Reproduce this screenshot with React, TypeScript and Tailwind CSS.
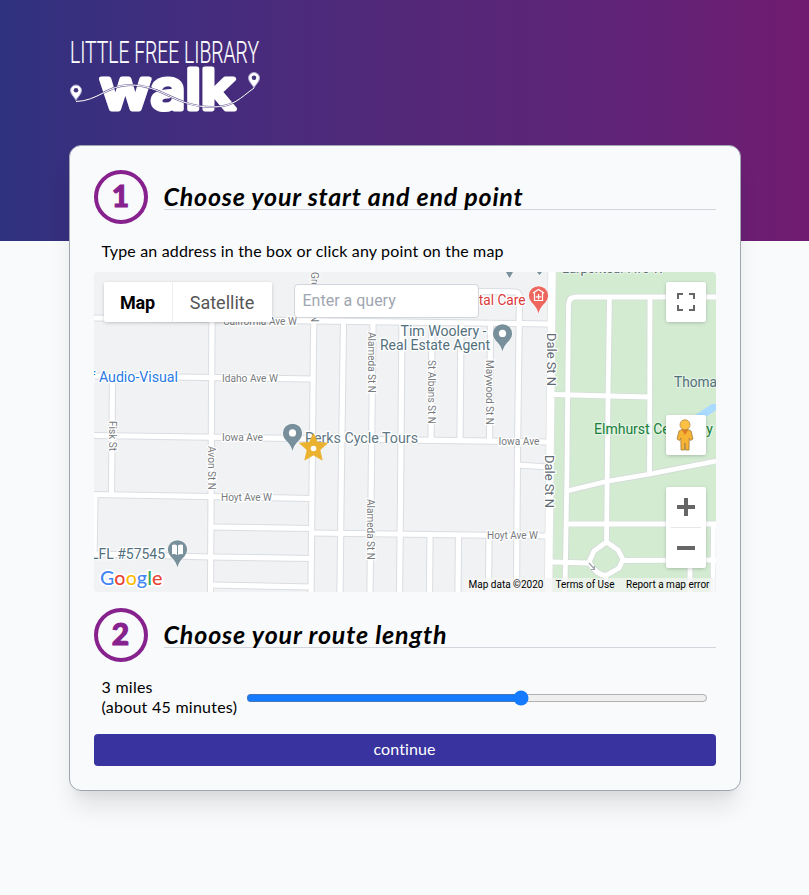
import React, { useState } from "react";

type Point = [number, number];

const streets: string[] = [
  "M94 318L548 324",
  "M94 376L313 379",
  "M94 435.5L548 442",
  "M94 494.5L312 498.5",
  "M211 527L312 528.5",
  "M312 533L548 536",
  "M94 554L211 557L312 558.5",
  "M211 585L312 587",
  "M112.5 376L111.5 495",
  "M95 495L94 556",
  "M212 320L210.5 592",
  "M315 272L313.5 340L311 592",
  "M343.5 322L341 500L340 592",
  "M373 322L371 500L370 592",
  "M402 322L400.5 500L399.5 592",
  "M432 322L431 440M430 535L429.5 592",
  "M461 322L460 440M458.5 535L458 592",
  "M490.5 322L489.5 441M489 535L488.5 592",
  "M440 291L515 292Q519 292 519.5 297L517.5 450L516.5 592",
  "M518 465L548 467",
];

const lanes: string[] = [
  "M565 592L567 470L568.5 305Q568.5 297 576 297L716 297",
  "M609.5 297L608 400L606.5 541",
  "M650 297L649.5 475",
  "M553 394.5L649 397",
  "M567 491L606 481.5L650 474L716 461",
  "M568 524H716",
  "M552 562L589 563",
  "M606.5 542L594 551L589 562Q596 575 606 575.5L619 568L623 559.5L618 550Z",
  "M623 560.5L716 560",
  "M605.5 575V592M690 561V592M713.5 524L713 592",
];

function Label({ x, y, w, children, size = 10, color = "#787c80", rotate, halo = "#fff" }: {
  x: number; y: number; w: number; children: string; size?: number; color?: string; rotate?: number; halo?: string;
}) {
  return (
    <text
      x={x}
      y={y}
      textLength={w}
      lengthAdjust="spacingAndGlyphs"
      fontSize={size}
      fill={color}
      stroke={halo}
      strokeWidth={2.5}
      strokeLinejoin="round"
      className="[paint-order:stroke]"
      transform={rotate ? `rotate(${rotate} ${x} ${y})` : undefined}
    >
      {children}
    </text>
  );
}

function Pin({ at, color = "#78909c", children }: { at: Point; color?: string; children?: React.ReactNode }) {
  return (
    <g transform={`translate(${at[0]} ${at[1]})`}>
      <path d="M0 17.5C-1.500 12-4 9.500-7 6.300A9.600 9.600 0 1 1 7 6.300C4 9.500 1.500 12 0 17.500Z" fill={color} stroke="#fff" strokeWidth="1" className="[paint-order:stroke]" />
      {children ?? <circle r="3.6" cy="-.6" fill="#fff" />}
    </g>
  );
}

function StreetMap() {
  return (
    <svg viewBox="94 272 622 320" className="block h-80 w-full font-['Roboto',sans-serif]">
      <rect x="94" y="272" width="622" height="320" fill="#f1f2f4" />
      <path d="M552 272H716V592H549Z" fill="#d2ebd1" />
      <path d="M692 417L712 404H716V410L700 421Z" fill="#aadaff" />
      <g fill="none" stroke="#dadde1" strokeWidth="7.2">
        {streets.map((d) => <path key={d} d={d} />)}
      </g>
      <g fill="none" stroke="#d5dcd9" strokeWidth="6.6">
        {lanes.map((d) => <path key={d} d={d} />)}
      </g>
      <path d="M552 272L548.500 592" stroke="#dfe3e2" strokeWidth="9" />
      <g fill="none" stroke="#fff">
        <g strokeWidth="5.2">{streets.map((d) => <path key={d} d={d} />)}</g>
        <g strokeWidth="4.8">{lanes.map((d) => <path key={d} d={d} />)}</g>
        <path d="M552 272L548.500 592" strokeWidth="7.4" />
      </g>
      <path d="M589 563L594.500 569M594.500 566V569.500H591" fill="none" stroke="#9aa3ab" strokeWidth="1.2" />

      <Label x={223} y={324.500} w={74}>California Ave W</Label>
      <Label x={222} y={381.500} w={56}>Idaho Ave W</Label>
      <Label x={222} y={441} w={41}>Iowa Ave</Label>
      <Label x={221} y={501} w={51}>Hoyt Ave W</Label>
      <Label x={498.500} y={445} w={41}>Iowa Ave</Label>
      <Label x={487} y={539} w={51}>Hoyt Ave W</Label>
      <Label x={108.500} y={421} w={30} rotate={90}>Fisk St</Label>
      <Label x={207.500} y={446} w={44} rotate={90}>Avon St N</Label>
      <Label x={310.500} y={272} w={50} rotate={90}>Grotto St N</Label>
      <Label x={368} y={332} w={61} rotate={90}>Alameda St N</Label>
      <Label x={366.500} y={499} w={61} rotate={90}>Alameda St N</Label>
      <Label x={427.500} y={360} w={64} rotate={90}>St Albans St N</Label>
      <Label x={486} y={360} w={65} rotate={90}>Maywood St N</Label>
      <Label x={546.500} y={333} w={53} size={13} color="#5f6b75" rotate={90}>Dale St N</Label>
      <Label x={545} y={455} w={53} size={13} color="#5f6b75" rotate={90}>Dale St N</Label>
      <Label x={562} y={273} w={102} size={12} color="#5f6b75" halo="#e3f2e2">Larpenteur Ave W</Label>
      <Label x={90.500} y={382} w={87.500} size={14} color="#2879e4">f Audio-Visual</Label>
      <Label x={400.500} y={336} w={86} size={14} color="#526f7d">Tim Woolery -</Label>
      <Label x={380} y={350} w={110} size={14} color="#526f7d">Real Estate Agent</Label>
      <Label x={455} y={305} w={70.500} size={14} color="#db3939">Dental Care</Label>
      <Label x={305} y={443} w={113} size={14} color="#607784">Perks Cycle Tours</Label>
      <Label x={91} y={559} w={74} size={14} color="#526f7d">LFL #57545</Label>
      <Label x={674} y={387} w={50} size={14} color="#52707a" halo="#e3f2e2">Thomas</Label>
      <Label x={594} y={434} w={119} size={14} color="#168039" halo="#e3f2e2">Elmhurst Cemetery</Label>

      <path d="M506 272H513L509.500 278ZM537 272H542L539.500 275Z" fill="#78909c" />
      <Pin at={[502.500, 334]} />
      <Pin at={[292.500, 433.500]} />
      <Pin at={[177.500, 550]}>
        <path d="M-5.500-5Q-2.500-6-.5-4.500V5Q-2.500 3.500-5.500 4.300ZM5.500-5Q2.500-6 .5-4.500V5Q2.500 3.500 5.500 4.300Z" fill="#fff" />
      </Pin>
      <Pin at={[538.500, 296]} color="#ee675f">
        <g fill="none" stroke="#fff" strokeWidth="1.200">
          <path d="M-5.500-3L0-6.500L5.500-3M-4-3.500V4.500H4V-3.500M0-2V3.500M-2.700.8H2.700" />
        </g>
      </Pin>
      <path d="M313.500 433.500L317.400 442.200L327.500 443.200L319.900 450L322.200 460L313.500 455L304.800 460L307.100 450L299.500 443.200L309.600 442.200Z" fill="#ebb22f" stroke="#ebb22f" strokeWidth=".8" />
      <circle cx="313.500" cy="448.500" r="2.800" fill="#fff" />

      <g fontSize="19.5" className="font-['Lato',sans-serif]" fontWeight="500" strokeWidth="3.500" stroke="#fff">
        <text x="100" y="584.500" textLength="62.500" lengthAdjust="spacingAndGlyphs" className="[paint-order:stroke]">
          <tspan fill="#4285f4">G</tspan><tspan fill="#ea4335">o</tspan><tspan fill="#fbbc04">o</tspan>
          <tspan fill="#4285f4">g</tspan><tspan fill="#34a853">l</tspan><tspan fill="#ea4335">e</tspan>
        </text>
      </g>
      <rect x="464" y="578" width="252" height="14" fill="#f5f5f5" fillOpacity=".7" />
      <g fontSize="10" fill="#000">
        <text x="468.500" y="588" textLength="75" lengthAdjust="spacingAndGlyphs">Map data ©2020</text>
        <text x="555.500" y="588" textLength="59" lengthAdjust="spacingAndGlyphs">Terms of Use</text>
        <text x="626" y="588" textLength="83.500" lengthAdjust="spacingAndGlyphs">Report a map error</text>
      </g>
    </svg>
  );
}

const control = "rounded-xs bg-white shadow-[0_1px_4px_-1px_rgba(0,0,0,0.3)]";

function MapPanel() {
  return (
    <div className="relative h-80 overflow-hidden rounded">
      <StreetMap />
      <div className={`absolute top-2.5 left-2.5 flex h-10 font-['Roboto',sans-serif] text-lg ${control}`}>
        <button className="w-[69px] border-r border-[#eeeeee] pt-0.5 font-bold tracking-[-0.2px] text-black">Map</button>
        <button className="w-[99px] pt-0.5 text-[#565656]">Satellite</button>
      </div>
      <input
        placeholder="Enter a query"
        className="absolute top-3 left-[200px] h-[34px] w-[185px] rounded border border-[#d2d6dc] bg-white px-2 pb-0.5 font-['Roboto',sans-serif] text-base placeholder:text-[#9fa6b2]"
      />
      <button className={`absolute top-2.5 right-2.5 flex size-10 items-center justify-center ${control}`}>
        <svg viewBox="0 0 18 18" className="size-[18px]" fill="none" stroke="#666" strokeWidth="2">
          <path d="M1 6V1H6M12 1H17V6M17 12V17H12M6 17H1V12" />
        </svg>
      </button>
      <button className={`absolute top-[143px] right-2.5 flex size-10 items-center justify-center ${control}`}>
        <svg viewBox="0 0 20 32" className="-ml-px h-8 w-5">
          <path d="M7 10.500L4 12L2 20L4.500 21.500L5.800 19L6 31H9.500L10 24L10.500 31H14L14.200 19L15.500 21.500L18 20L16 12L13 10.500Z" fill="#f5b434" stroke="#a27a3d" strokeWidth=".8" />
          <path d="M6.500 10.500H13.500L10 16Z" fill="#dd7b23" />
          <circle cx="10" cy="5.800" r="5" fill="#fbc044" stroke="#b68a45" strokeWidth=".8" />
        </svg>
      </button>
      <div className={`absolute right-2.5 bottom-6 flex h-[81px] w-10 flex-col items-center ${control}`}>
        <button className="flex h-10 w-full items-center justify-center">
          <svg viewBox="0 0 18 18" className="size-[18px]" stroke="#666" strokeWidth="4"><path d="M0 9H18M9 0V18" /></svg>
        </button>
        <div className="h-px w-[30px] bg-[#e6e6e6]" />
        <button className="flex h-10 w-full items-center justify-center">
          <svg viewBox="0 0 18 18" className="size-[18px]" stroke="#666" strokeWidth="4"><path d="M0 9H18" /></svg>
        </button>
      </div>
    </div>
  );
}

function LogoPin({ x, y }: { x: number; y: number }) {
  return (
    <g transform={`translate(${x} ${y})`}>
      <path d="M0 9C-1 6-5.500 3-5.500-1A5.500 5.500 0 0 1 5.500-1C5.500 3 1 6 0 9Z" fill="#fff" stroke="#aaa5cc" strokeWidth="1" />
      <circle cy="-1.200" r="2.300" fill="#45357d" />
    </g>
  );
}

function Logo() {
  return (
    <svg viewBox="0 0 192 80" className="block h-20 w-48" fill="#fff">
      <text x="0" y="24.5" fontSize="32" fontWeight="300" textLength="189" lengthAdjust="spacingAndGlyphs" stroke="#fff" strokeWidth=".2" className="font-['Roboto',sans-serif]">
        LITTLE FREE LIBRARY
      </text>
      <text x="30" y="71" fontSize="54.5" fontWeight="500" textLength="135" lengthAdjust="spacingAndGlyphs" stroke="#fff" strokeWidth="4.8" strokeLinejoin="round" className="font-['Inter',sans-serif]">
        walk
      </text>
      <path d="M6 63.500C28 63 38 47 60 47C92 47 106 69 142 69C164 69 170 60 184 50" fill="none" stroke="#45357d" strokeOpacity=".8" strokeWidth="2" />
      <path d="M6 63.500C28 63 38 47 60 47C92 47 106 69 142 69C164 69 170 60 184 50" fill="none" stroke="#fff" strokeWidth="1" />
      <LogoPin x={6} y={53.500} />
      <LogoPin x={184} y={41} />
    </svg>
  );
}

function Step({ number, title, spacing }: { number: number; title: string; spacing: string }) {
  return (
    <div className="flex items-center gap-4">
      <div className="flex size-[54px] shrink-0 items-center justify-center rounded-full border-4 border-[#86218e] text-[30px] leading-none font-black text-[#86218e]">
        <span className="-mt-1 [-webkit-text-stroke:1px_#86218e]">{number}</span>
      </div>
      <h2 className={`flex-1 border-b border-[#d2d6dc] pb-px text-[25px] leading-6 font-bold italic ${spacing}`}>{title}</h2>
    </div>
  );
}

export default function App() {
  const [miles, setMiles] = useState(3);
  return (
    <div className="min-h-[895px] bg-[#f9fafc] font-['Lato',sans-serif] text-base text-black">
      <header className="h-[241px] bg-[linear-gradient(to_right,#2f327f,#442c7d_25%,#532879_50%,#622377_80%,#711c70)] pt-[38px]">
        <div className="mx-auto w-[669px]">
          <Logo />
        </div>
      </header>
      <main className="relative mx-auto -mt-24 h-[646px] w-[672px] rounded-xl border border-[#9fa6b2] bg-[#f9fafc] p-6 shadow-[0_20px_25px_-5px_rgba(0,0,0,0.1),0_10px_10px_-5px_rgba(0,0,0,0.04)]">
        <Step number={1} title="Choose your start and end point" spacing="tracking-[0.78px]" />
        <p className="mt-[15px] mb-[9px] pl-2 leading-6 tracking-[0.17px]">Type an address in the box or click any point on the map</p>
        <MapPanel />
        <div className="mt-4">
          <Step number={2} title="Choose your route length" spacing="tracking-[0.85px]" />
        </div>
        <div className="mt-4 flex items-center pr-2 pl-2">
          <div className="relative -top-px w-[144px] shrink-0 leading-5 tracking-[0.25px]">
            {miles} miles
            <br />
            (about {miles * 15} minutes)
          </div>
          <input
            type="range"
            min={0}
            max={5}
            value={miles}
            onChange={(e) => setMiles(Number(e.target.value))}
            className="h-4 min-w-0 flex-1 accent-[#147aff]"
          />
        </div>
        <button className="mt-4 h-8 w-full rounded bg-[#38339f] pb-0.5 tracking-[0.1px] text-white">continue</button>
      </main>
    </div>
  );
}
